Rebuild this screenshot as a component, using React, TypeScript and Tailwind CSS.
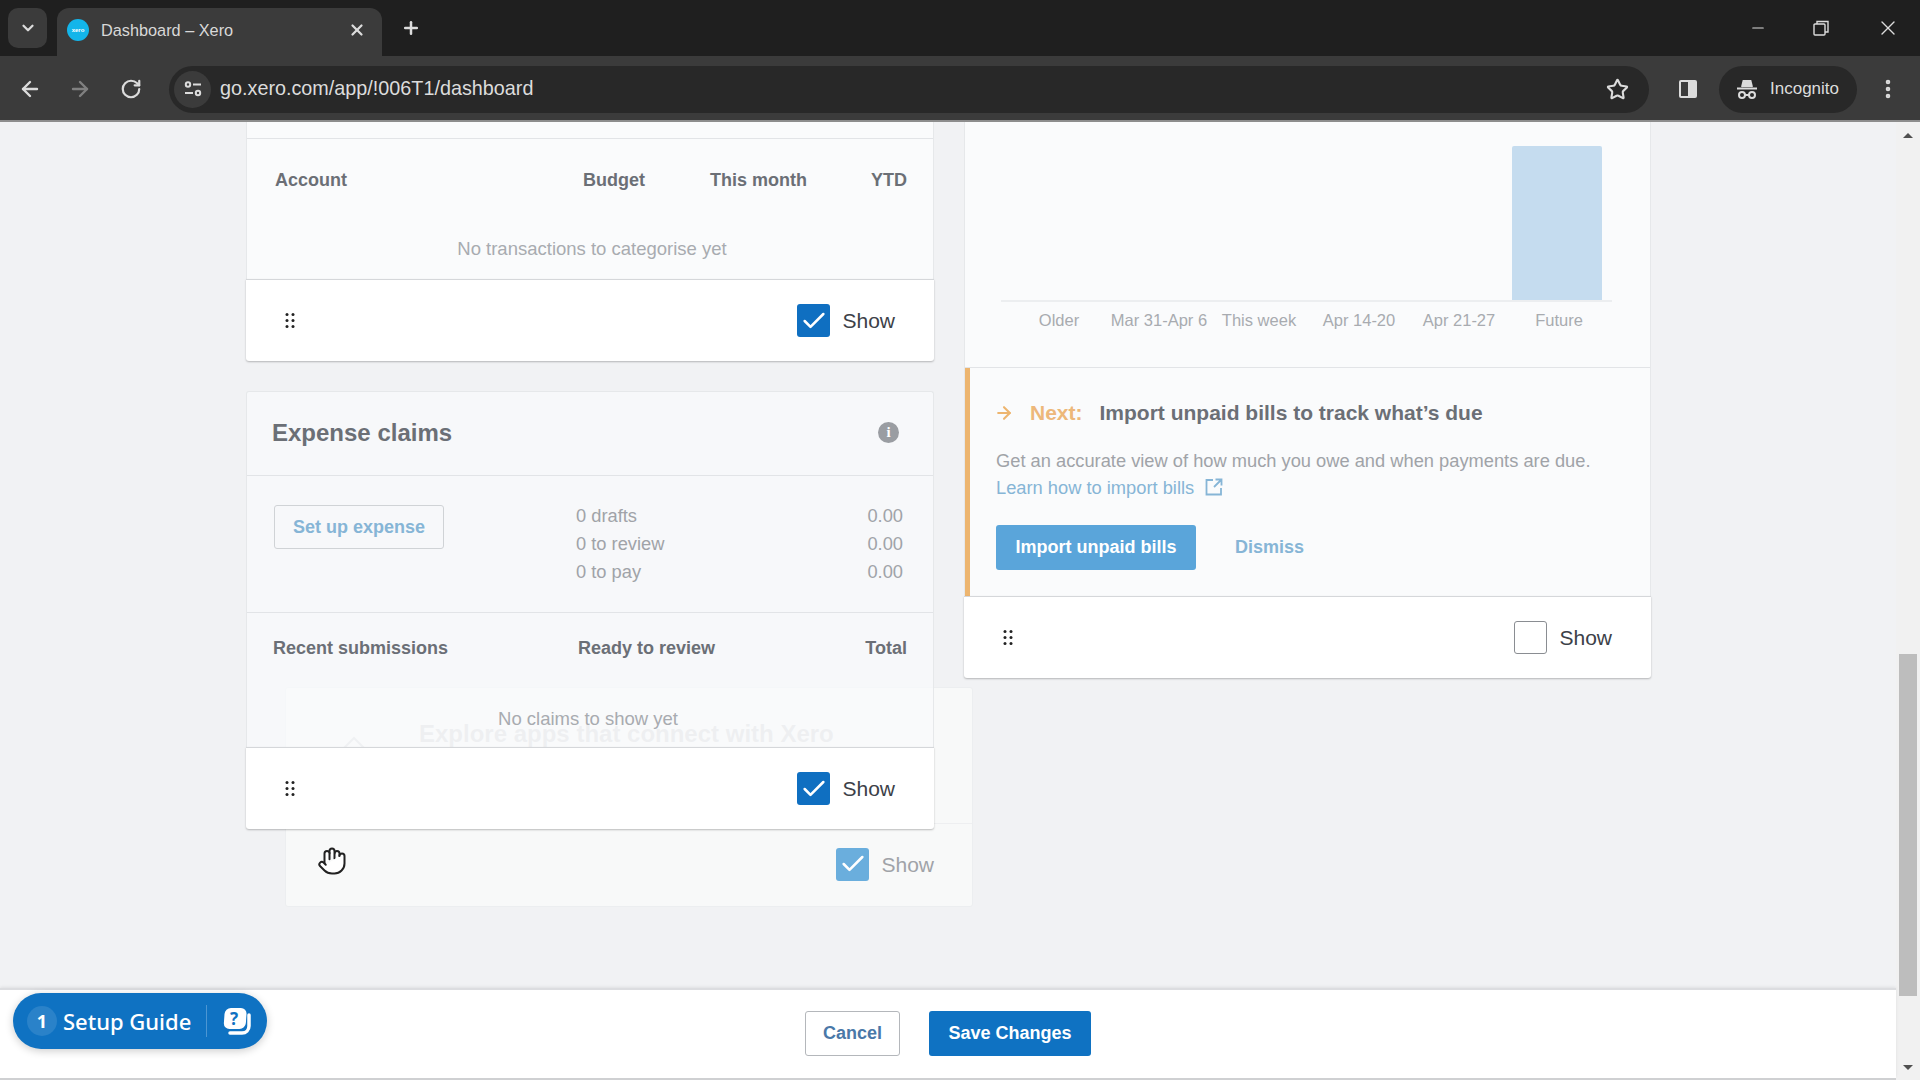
import React from 'react';
import { ArrowLeft, ArrowRight, Check, ChevronDown, EllipsisVertical, Hand, Minus, Plus, RotateCw, Star, X } from 'lucide-react';

const DragHandle = () => (
  <svg width="10" height="15" viewBox="0 0 10 15" fill="#222">
    {[1.5, 7.5, 13.5].map((y) => (
      <React.Fragment key={y}>
        <circle cx="2" cy={y} r="1.5" />
        <circle cx="8" cy={y} r="1.5" />
      </React.Fragment>
    ))}
  </svg>
);

const ShowToggle = ({ checked = true }: { checked?: boolean }) => (
  <div className="flex items-center gap-[12px]">
    {checked ? (
      <div className="flex h-[33px] w-[33px] items-center justify-center rounded-[3px] bg-[#0f6fc1]">
        <Check size={28} strokeWidth={2.2} className="text-white" />
      </div>
    ) : (
      <div className="h-[33px] w-[33px] rounded-[3px] border-[1.5px] border-[#8a8d92] bg-white" />
    )}
    <span className="text-[21px] leading-none text-[#3c4148]">Show</span>
  </div>
);

const CardFooter = ({ checked = true }: { checked?: boolean }) => (
  <div className="flex h-[82px] items-center justify-between rounded-b-[3px] border-t border-[#d5d7da] bg-white pl-[39px] pr-[39px] shadow-[0_1px_2px_rgba(0,0,0,0.25)]">
    <DragHandle />
    <ShowToggle checked={checked} />
  </div>
);

const ExpenseRow = ({ label }: { label: string }) => (
  <div className="flex h-[28px] items-center justify-between text-[18.3px] text-[#a0a3a8]">
    <span>{label}</span>
    <span>0.00</span>
  </div>
);

const WEEK_LABELS = ['Older', 'Mar 31-Apr 6', 'This week', 'Apr 14-20', 'Apr 21-27', 'Future'];

const BrowserChrome = () => (
  <div className="shrink-0 text-[#dcdcdc]">
    {/* tab strip */}
    <div className="flex h-[56px] items-end bg-[#1f1f1f] pl-[8px]">
      <div className="mb-[8px] flex h-[40px] w-[39px] items-center justify-center rounded-[10px] bg-[#3b3b3b]">
        <ChevronDown size={18} strokeWidth={3} />
      </div>
      <div className="ml-[10px] flex h-[48px] w-[325px] items-center rounded-t-[12px] bg-[#3b3b3b] pb-[4px] pl-[10px] pr-[16px]">
        <div className="flex h-[22px] w-[22px] items-center justify-center rounded-full bg-[#13b5ea] text-[6px] font-bold text-white">xero</div>
        <span className="ml-[12px] flex-1 text-[16.3px] text-[#d8d8d8]">Dashboard – Xero</span>
        <X size={18} strokeWidth={3} />
      </div>
      <div className="mb-[8px] ml-[19px] flex h-[40px] items-center">
        <Plus size={20} strokeWidth={3} />
      </div>
      <div className="mb-[8px] ml-auto flex h-[40px] items-center">
        <Minus size={18} strokeWidth={1.5} className="mr-[46px]" />
        <svg width="16" height="16" viewBox="0 0 16 16" fill="none" stroke="#dcdcdc" strokeWidth="1.4" className="mr-[47px]">
          <rect x="1" y="4" width="11" height="11" rx="1" />
          <path d="M4 4V1.5h11V12h-3" />
        </svg>
        <X size={24} strokeWidth={1.4} className="mr-[20px]" />
      </div>
    </div>
    {/* toolbar */}
    <div className="flex h-[66px] items-center border-b-[2px] border-[#8d8d8d] bg-[#3b3b3b] pl-[18px] pt-[2px]">
      <ArrowLeft size={24} strokeWidth={2.4} />
      <ArrowRight size={24} strokeWidth={2.4} className="ml-[26px] text-[#808080]" />
      <RotateCw size={22} strokeWidth={2.4} className="ml-[28px]" />
      <div className="ml-[27px] flex h-[47px] w-[1480px] items-center rounded-full bg-[#282828] pl-[5px] pr-[20px]">
        <div className="flex h-[37px] w-[37px] items-center justify-center rounded-full bg-[#3b3b3b]">
          <svg width="18" height="16" viewBox="0 0 18 16" fill="none" stroke="#dcdcdc" strokeWidth="2">
            <circle cx="4" cy="3.5" r="2.2" />
            <path d="M9 3.5h8M1 12h8" />
            <circle cx="14" cy="12" r="2.2" />
          </svg>
        </div>
        <span className="ml-[9px] flex-1 text-[19.8px] text-[#dcdcdc]">go.xero.com/app/!006T1/dashboard</span>
        <Star size={23} strokeWidth={2.2} />
      </div>
      <svg width="20" height="20" viewBox="0 0 20 20" className="ml-[29px]">
        <rect x="1" y="1" width="18" height="18" rx="2" fill="#dcdcdc" />
        <rect x="3" y="3" width="7" height="14" fill="#3b3b3b" />
      </svg>
      <div className="ml-[21px] flex h-[47px] w-[138px] items-center rounded-full bg-[#282828] pl-[17px]">
        <svg width="22" height="22" viewBox="0 0 22 22" fill="none" stroke="#dcdcdc" strokeWidth="2">
          <path d="M6 9l1.5-6h7L16 9" fill="#dcdcdc" />
          <path d="M1 10.5h20" />
          <circle cx="6" cy="17" r="3" />
          <circle cx="16" cy="17" r="3" />
          <path d="M9 17h4" />
        </svg>
        <span className="ml-[12px] text-[17px]">Incognito</span>
      </div>
      <EllipsisVertical size={24} strokeWidth={2.6} className="ml-[19px]" />
    </div>
  </div>
);

const ExpenseClaims = () => (
  <div>
    {/* see-through while a card is dragged behind it */}
    <div className="rounded-t-[3px] border-x border-t border-[#e6e8ea] bg-[#fafbfc]/70">
      <div className="flex h-[84px] items-center justify-between border-b border-[#e2e4e7] pb-[2px] pl-[25px] pr-[34px]">
        <h2 className="text-[24px] font-bold text-[#6b6f76]">Expense claims</h2>
        <div className="flex h-[21px] w-[21px] items-center justify-center rounded-full bg-[#9a9da2] font-['Liberation_Serif'] text-[15px] font-bold text-white">i</div>
      </div>
      <div className="flex h-[137px] border-b border-[#e2e4e7] pl-[27px] pr-[30px] pt-[26px]">
        <div className="mt-[3px] flex h-[44px] w-[170px] items-center justify-center rounded-[3px] border border-[#d0d3d6] text-[18px] font-bold text-[#86b5d6]">Set up expense</div>
        <div className="ml-[132px] flex-1">
          <ExpenseRow label="0 drafts" />
          <ExpenseRow label="0 to review" />
          <ExpenseRow label="0 to pay" />
        </div>
      </div>
      <div className="h-[134px] overflow-hidden">
        <div className="flex h-[71px] items-center px-[26px] text-[18px] font-bold text-[#6b6f76]">
          <span className="w-[305px]">Recent submissions</span>
          <span className="flex-1">Ready to review</span>
          <span>Total</span>
        </div>
        <p className="mt-[21px] pr-[4px] text-center text-[18.5px] text-[#a8abb0]">No claims to show yet</p>
      </div>
    </div>
    <CardFooter />
  </div>
);

// the card being dragged, shown faded behind the column
const DraggedGhost = () => (
  <div className="absolute left-[285px] top-[565px] z-0 w-[688px] rounded-[3px] border border-[#eceef0] bg-[#f8f9f9]">
    <div className="relative h-[135px] overflow-hidden">
      <svg width="28" height="16" viewBox="0 0 28 16" fill="none" stroke="#d8d9dc" strokeWidth="2" className="absolute left-[54px] top-[48px]">
        <path d="M1 15L14 2l13 13" />
      </svg>
      <p className="pl-[133px] pt-[28px] text-[24px] font-bold text-[#d3d4d7]">Explore apps that connect with Xero</p>
    </div>
    <div className="flex h-[83px] items-center justify-end border-t border-[#eeeff1] pb-[2px] pr-[38px]">
      <div className="flex items-center gap-[12px]">
        <div className="flex h-[33px] w-[33px] items-center justify-center rounded-[3px] bg-[#6aaedd]">
          <Check size={28} strokeWidth={2.2} className="text-white" />
        </div>
        <span className="text-[21px] leading-none text-[#a0a3a8]">Show</span>
      </div>
    </div>
    <Hand size={30} strokeWidth={1.6} fill="#fff" className="absolute left-[31px] top-[158px] text-[#222]" />
  </div>
);

const LeftColumn = () => (
  <div className="relative z-10 flex w-[688px] flex-col gap-[30px]">
    <div>
      <div className="border-x border-[#e6e8ea] bg-[#fafbfc]">
        <div className="h-[17px] border-b border-[#e2e4e7]" />
        <div className="flex h-[82px] items-center pl-[28px] pr-[26px] text-[18px] font-bold text-[#6b6f76]">
          <span className="flex-1">Account</span>
          <span>Budget</span>
          <span className="ml-[65px]">This month</span>
          <span className="ml-[64px]">YTD</span>
        </div>
        <p className="h-[58px] pl-[4px] pt-[17px] text-center text-[18.5px] leading-[22px] text-[#a8abb0]">No transactions to categorise yet</p>
      </div>
      <CardFooter />
    </div>
    <ExpenseClaims />
  </div>
);

const RightColumn = () => (
  <div className="relative z-10 w-[687px] self-start">
    <div className="border-x border-[#e6e8ea] bg-[#fafbfc]">
      <div className="h-[246px] border-b border-[#e2e4e7] pl-[36px] pr-[38px] pt-[24px]">
        <div className="flex h-[156px] items-end justify-end border-b-[2px] border-[#eceef0] pr-[10px]">
          <div className="h-[154px] w-[90px] rounded-t-[2px] bg-[#c5dcef]" />
        </div>
        <div className="flex pl-[8px] pt-[6px] text-[16.5px] text-[#a8abb0]">
          {WEEK_LABELS.map((label) => (
            <span key={label} className="w-[100px] whitespace-nowrap text-center">{label}</span>
          ))}
        </div>
      </div>
      <div className="h-[228px] border-l-[5px] border-[#edb56f] pl-[26px] pt-[33px]">
        <div className="flex items-center text-[21px] font-bold leading-[24px]">
          <ArrowRight size={20} strokeWidth={2.5} className="-ml-[2px] text-[#edb56f]" />
          <span className="ml-[16px] text-[#edb87a]">Next:</span>
          <span className="ml-[17px] text-[#6b6f76]">Import unpaid bills to track what’s due</span>
        </div>
        <p className="mt-[22px] text-[18.3px] leading-[28px] text-[#a0a3a8]">Get an accurate view of how much you owe and when payments are due.</p>
        <a className="flex items-center text-[18.3px] leading-[26px] text-[#86b5d6]">
          Learn how to import bills
          <svg width="18" height="18" viewBox="0 0 18 18" fill="none" stroke="#86b5d6" strokeWidth="1.8" className="ml-[11px] mb-[3px]">
            <path d="M8 2H1.5v14.5H16V10M10.5 1.5H16.5V7.5M16 2L9 9" />
          </svg>
        </a>
        <div className="mt-[24px] flex items-center">
          <div className="flex h-[45px] w-[200px] items-center justify-center rounded-[3px] bg-[#5aa5da] text-[18px] font-bold text-white">Import unpaid bills</div>
          <span className="ml-[39px] text-[18px] font-bold text-[#86b5d6]">Dismiss</span>
        </div>
      </div>
    </div>
    <CardFooter checked={false} />
  </div>
);

const SetupGuide = () => (
  <div className="absolute bottom-[31px] left-[13px] z-30 flex h-[56px] w-[254px] items-center rounded-full bg-[#0f72c2] font-['Noto_Sans'] text-white shadow-[0_2px_8px_rgba(0,0,0,0.2)]">
    <div className="ml-[14px] flex h-[30px] w-[30px] items-center justify-center rounded-full bg-[#2a82c9] text-[18px] font-bold">1</div>
    <span className="ml-[6px] text-[22px] font-medium">Setup Guide</span>
    <div className="ml-[15px] h-[32px] w-px bg-[#4c96d3]" />
    <svg width="30" height="29" viewBox="0 0 30 29" className="ml-[15px]">
      <path d="M27 8v11c0 4-3 7-7 7H8" fill="none" stroke="#fff" strokeWidth="3.5" strokeLinecap="round" />
      <rect x="1" y="1" width="22" height="21" rx="6" fill="#fff" transform="skewX(-4) translate(2 0)" />
      <text x="12" y="18" textAnchor="middle" fontSize="17" fontWeight="700" fill="#0f72c2" fontFamily="Noto Sans">?</text>
    </svg>
  </div>
);

const Scrollbar = () => (
  <div className="flex w-[24px] shrink-0 flex-col items-center bg-[#f1f1f1]">
    <div className="flex h-[26px] items-center">
      <div className="h-0 w-0 border-x-[5px] border-b-[5px] border-x-transparent border-b-[#505050]" />
    </div>
    <div className="mt-[506px] h-[342px] w-[18px] bg-[#bdbdbd]" />
    <div className="mt-auto flex h-[26px] items-center">
      <div className="h-0 w-0 border-x-[5px] border-t-[5px] border-x-transparent border-t-[#505050]" />
    </div>
  </div>
);

export default function App() {
  return (
    <div className="flex h-screen w-full flex-col overflow-hidden bg-[#f1f2f4] font-['Liberation_Sans',sans-serif]">
      <BrowserChrome />
      <div className="relative flex min-h-0 flex-1">
        <div className="relative flex min-w-0 flex-1 flex-col">
          <div className="relative min-h-0 flex-1 overflow-hidden">
            <DraggedGhost />
            <div className="flex items-start gap-[30px] pl-[246px]">
              <LeftColumn />
              <RightColumn />
            </div>
          </div>
          <div className="flex h-[90px] shrink-0 items-center justify-center gap-[29px] border-t-[2px] border-[#dcdde0] bg-white pb-[2px] shadow-[0_-1px_3px_rgba(0,0,0,0.08)]">
            <div className="flex h-[45px] w-[95px] items-center justify-center rounded-[3px] border border-[#b4b7bb] text-[18px] font-bold text-[#4a78a8]">Cancel</div>
            <div className="flex h-[45px] w-[162px] items-center justify-center rounded-[3px] bg-[#0f72c2] text-[18px] font-bold text-white">Save Changes</div>
          </div>
          <div className="h-[2px] shrink-0 bg-[#cfd0d2]" />
          <SetupGuide />
        </div>
        <Scrollbar />
      </div>
    </div>
  );
}
